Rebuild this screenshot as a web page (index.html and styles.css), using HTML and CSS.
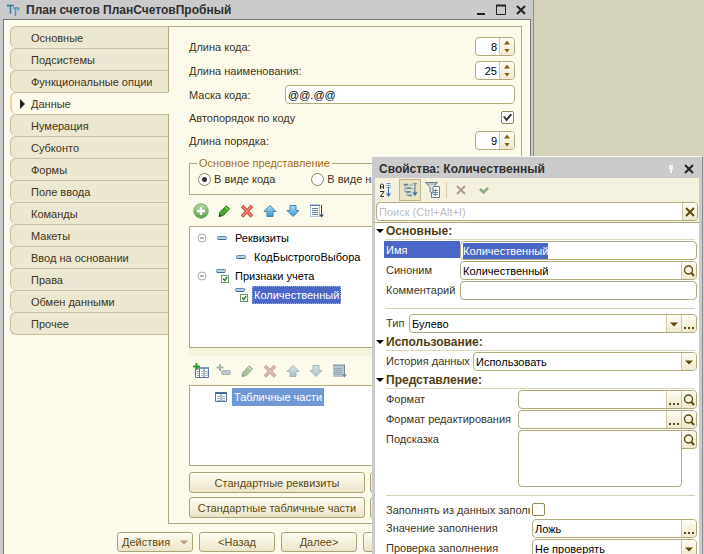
FILE: index.html
```html
<!DOCTYPE html>
<html lang="ru">
<head>
<meta charset="utf-8">
<title>План счетов ПланСчетовПробный</title>
<link rel="stylesheet" href="styles.css">
</head>
<body>
<svg class="sprite" aria-hidden="true">
  <defs>
    <linearGradient id="blue" x1="0" y1="0" x2="0" y2="1"><stop offset="0" stop-color="#a9dcf6"/><stop offset="1" stop-color="#3a9ad6"/></linearGradient>
    <linearGradient id="green" x1="0" y1="0" x2="0" y2="1"><stop offset="0" stop-color="#b5dba0"/><stop offset="1" stop-color="#5fa050"/></linearGradient>
  </defs>
  <symbol id="i-add" viewBox="0 0 16 16"><circle cx="8" cy="8" r="7.2" fill="url(#green)" stroke="#73a566"/><path d="M8 4v8M4 8h8" stroke="#fff" stroke-width="2.4"/></symbol>
  <symbol id="i-edit" viewBox="0 0 16 16"><path d="M3 13.5l.8-4 6.2-6.700 3.600 3-6.300 6.700z" fill="#45a62d" stroke="#2e7b20"/><path d="M9 4l3.500 3" stroke="#b4e09c"/><path d="M3 13.500l.5-2.500 2 2z" fill="#23451b"/></symbol>
  <symbol id="i-del" viewBox="0 0 16 16"><path d="M3 3l10 10.500M13 3l-10 10.500" stroke="#d8473d" stroke-width="3.400"/><path d="M3.500 3.500l9 9.500M12.500 3.500l-9 9.500" stroke="#f08a7c" stroke-width="1.400"/></symbol>
  <symbol id="i-up" viewBox="0 0 16 16"><path d="M8 2.500l6 6h-3v5H5v-5H2z" fill="url(#blue)" stroke="#407fae"/></symbol>
  <symbol id="i-down" viewBox="0 0 16 16"><path d="M8 13.500l6-6h-3v-5H5v5H2z" fill="url(#blue)" stroke="#407fae"/></symbol>
  <symbol id="i-list" viewBox="0 0 16 16"><path d="M2.500 1.500h9v12h-9z" fill="#fff" stroke="#b1c4d5"/><path d="M2 2.500h10M4 5.500h6M4 7.500h6M4 9.500h6M4 11.500h6" stroke="#61819f"/><path d="M13.500 2v11" stroke="#304e6b"/><path d="M11 11.500h5l-2.500 3z" fill="#304e6b"/></symbol>
  <symbol id="i-listoff" viewBox="0 0 16 16"><path d="M2 1h12v13H2z" fill="#b9c6cf"/><path d="M2 2.500h12M3 5.500h8M3 7.500h8M3 9.500h8M3 11.500h8" stroke="#8fa5b5"/><path d="M13.500 2v11" stroke="#6f8797"/><path d="M11 11.500h5l-2.500 3z" fill="#6f8797"/></symbol>
  <symbol id="i-table" viewBox="0 0 16 16"><path d="M2.500 3.500h11v9h-11z" fill="#fff" stroke="#587a9f"/><path d="M2 4h12" stroke="#496f99" stroke-width="2"/><path d="M8 4v9" stroke="#587a9f"/><path d="M4 7.500h3M9 7.500h3M4 9.500h3M9 9.500h3M4 11.500h3M9 11.500h3" stroke="#a5b6ca"/></symbol>
  <symbol id="i-addtable" viewBox="0 0 16 16"><path d="M2.500 4.500h13v10h-13z" fill="#fff" stroke="#587a9f"/><path d="M2 5h14" stroke="#7c9ab8" stroke-width="2"/><path d="M6.500 5v9M11 5v9" stroke="#587a9f"/><path d="M4 8.500h2M8 8.500h2M12 8.500h3M4 10.500h2M8 10.500h2M12 10.500h3M4 12.500h2M8 12.500h2M12 12.500h3" stroke="#a5b6ca"/><path d="M3.500 0v7M0 3.500h7" stroke="#329f2d" stroke-width="2"/></symbol>
  <symbol id="i-addsub" viewBox="0 0 16 16"><path d="M4 1v7M0.500 4.500h7" stroke="#4c8a60" stroke-width="2"/><rect x="5.500" y="7.500" width="9" height="4" rx="1" fill="#79a0bd" stroke="#547f9d"/></symbol>
  <symbol id="i-dash" viewBox="0 0 16 16"><rect x="3.500" y="6.500" width="9" height="3" rx="1" fill="#b4d0e0" stroke="#5e8aab"/><path d="M4 9.500h8" stroke="#456f91"/></symbol>
  <symbol id="i-flag" viewBox="0 0 16 16"><rect x="2.500" y="1.500" width="9" height="3" rx="1" fill="#b4d0e0" stroke="#5e8aab"/><path d="M3 4.500h8" stroke="#456f91"/><rect x="7.500" y="7.500" width="7" height="7" fill="#fff" stroke="#6a9b6e"/><path d="M9 10.500l1.700 2 2.500-3.500" fill="none" stroke="#3b8134" stroke-width="1.600"/></symbol>
  <symbol id="i-minus" viewBox="0 0 16 16"><circle cx="8" cy="8" r="4" fill="#fff" stroke="#aaa"/><path d="M6 8h4" stroke="#666"/></symbol>
  <symbol id="i-x" viewBox="0 0 16 16"><path d="M4 4l8 8M12 4l-8 8" stroke="currentColor" stroke-width="2"/></symbol>
  <symbol id="i-check" viewBox="0 0 16 16"><path d="M4 7l3.500 3.500 4.500-4.500" fill="none" stroke="currentColor" stroke-width="2.500"/></symbol>
  <symbol id="i-search" viewBox="0 0 16 16"><circle cx="7.500" cy="7" r="4" fill="none" stroke="currentColor" stroke-width="1.400"/><path d="M10 9.500l3 3.500" stroke="currentColor" stroke-width="2"/></symbol>
  <symbol id="i-drop" viewBox="0 0 16 16"><path d="M4 6.500h8l-4 4z" fill="currentColor"/></symbol>
  <symbol id="i-dots" viewBox="0 0 16 16"><path d="M3 11h2v2H3zM7 11h2v2H7zM11 11h2v2h-2z" fill="currentColor"/></symbol>
  <symbol id="i-sort" viewBox="0 0 16 16"><path d="M2.500 7V3l1-1h1l1 1v4M2.500 5h3M2 9.500h4L2.500 14.500H6" fill="none" stroke="#303030"/><path d="M10.500 1v12M12 1v5M9 1v5" stroke="#3267b5" stroke-dasharray="1 1"/><path d="M10.500 6v7" stroke="#3267b5"/><path d="M8 11.500h5l-2.500 3.500z" fill="#3267b5"/></symbol>
  <symbol id="i-group" viewBox="0 0 20 20"><path d="M3 4h5M6 8h5M6 12h5M8 16h4" stroke="#5b87a6" stroke-width="2"/><path d="M4.500 5v7h2M6.500 13v3h2M9 4.500h4M11 8.500h3" fill="none" stroke="#7895a9"/><path d="M15.500 2v13" stroke="#315f90"/><path d="M13 12.500h5l-2.500 4zM13 3h5" fill="#315f90" stroke="#6a94bc"/></symbol>
  <symbol id="i-filter" viewBox="0 0 16 16"><path d="M6.500 4.500h8v11h-8z" fill="#fff" stroke="#5f82a5"/><path d="M8 8.500h5M8 10.500h5M8 12.500h5M10.500 7v7" stroke="#668bb1"/><path d="M.5.500h12l-4.500 5v6l-3-2v-4z" fill="#dce3e3" stroke="#6b7e87"/><path d="M2 2h9" stroke="#8c9ca5"/></symbol>
</svg>

<div class="desktop">
<main class="window">
  <header class="titlebar">
    <svg class="app-icon" viewBox="0 0 14 14" aria-hidden="true"><path d="M0 2.500h7M3.500 2v9" fill="none" stroke="#357a9e" stroke-width="1.500"/><path d="M1 4V1.500M6 5h6M8.500 5v8M11.500 5v2.500" fill="none" stroke="#5292b0" stroke-width="1.500"/></svg>
    <h1>План счетов ПланСчетовПробный</h1>
    <div class="win-controls">
      <button aria-label="Свернуть"><svg viewBox="0 0 12 12"><path d="M2 10h8" stroke="#222" stroke-width="2"/></svg></button>
      <button aria-label="Развернуть"><svg viewBox="0 0 12 12"><path d="M1.500 1.500h9v9h-9z" fill="none" stroke="#222"/><path d="M1 1.500h10" stroke="#222" stroke-width="2"/></svg></button>
      <button aria-label="Закрыть"><svg viewBox="0 0 12 12"><path d="M2 2l8 8M10 2l-8 8" stroke="#222" stroke-width="2"/></svg></button>
    </div>
  </header>
  <div class="client">
    <div class="workspace">
      <nav class="tabs">
        <button>Основные</button>
        <button>Подсистемы</button>
        <button>Функциональные опции</button>
        <button class="active" aria-current="page">Данные</button>
        <button>Нумерация</button>
        <button>Субконто</button>
        <button>Формы</button>
        <button>Поле ввода</button>
        <button>Команды</button>
        <button>Макеты</button>
        <button>Ввод на основании</button>
        <button>Права</button>
        <button>Обмен данными</button>
        <button>Прочее</button>
      </nav>
      <section class="page">
        <div class="rows">
          <div class="row"><label for="len-code">Длина кода:</label><span class="spin"><input id="len-code" type="number" value="8"><span class="steps"><button aria-label="Больше"></button><button class="less" aria-label="Меньше"></button></span></span></div>
          <div class="row"><label for="len-name">Длина наименования:</label><span class="spin"><input id="len-name" type="number" value="25"><span class="steps"><button aria-label="Больше"></button><button class="less" aria-label="Меньше"></button></span></span></div>
          <div class="row"><label class="mask-label" for="mask">Маска кода:</label><input class="text-box" id="mask" type="text" value="@@.@@"></div>
          <div class="row short"><label for="auto">Автопорядок по коду</label><input class="check" id="auto" type="checkbox" checked></div>
          <div class="row"><label for="len-order">Длина порядка:</label><span class="spin"><input id="len-order" type="number" value="9"><span class="steps"><button aria-label="Больше"></button><button class="less" aria-label="Меньше"></button></span></span></div>
        </div>
        <fieldset class="group">
          <legend>Основное представление</legend>
          <div class="radios">
            <label><input type="radio" name="view" checked>В виде кода</label>
            <label><input type="radio" name="view">В виде наименования</label>
          </div>
        </fieldset>
        <div class="toolbar">
          <button aria-label="Добавить"><svg><use href="#i-add"/></svg></button>
          <button aria-label="Изменить"><svg><use href="#i-edit"/></svg></button>
          <button aria-label="Удалить"><svg><use href="#i-del"/></svg></button>
          <button aria-label="Вверх"><svg><use href="#i-up"/></svg></button>
          <button aria-label="Вниз"><svg><use href="#i-down"/></svg></button>
          <button aria-label="Упорядочить"><svg><use href="#i-list"/></svg></button>
        </div>
        <ul class="tree tall">
          <li><svg><use href="#i-minus"/></svg><svg><use href="#i-dash"/></svg><span>Реквизиты</span></li>
          <li class="child"><svg><use href="#i-dash"/></svg><span>КодБыстрогоВыбора</span></li>
          <li><svg><use href="#i-minus"/></svg><svg><use href="#i-flag"/></svg><span>Признаки учета</span></li>
          <li class="child"><svg><use href="#i-flag"/></svg><span class="selected">Количественный</span></li>
        </ul>
        <div class="splitter"></div>
        <div class="toolbar low">
          <button aria-label="Добавить табличную часть"><svg><use href="#i-addtable"/></svg></button>
          <button aria-label="Добавить реквизит" disabled><svg><use href="#i-addsub"/></svg></button>
          <button aria-label="Изменить" disabled><svg><use href="#i-edit"/></svg></button>
          <button aria-label="Удалить" disabled><svg><use href="#i-del"/></svg></button>
          <button aria-label="Вверх" disabled><svg><use href="#i-up"/></svg></button>
          <button aria-label="Вниз" disabled><svg><use href="#i-down"/></svg></button>
          <button class="solid" aria-label="Упорядочить" disabled><svg><use href="#i-listoff"/></svg></button>
        </div>
        <ul class="tree">
          <li class="leaf"><svg><use href="#i-table"/></svg><span class="muted">Табличные части</span></li>
        </ul>
        <div class="std-buttons">
          <button class="btn">Стандартные реквизиты</button><button class="btn" aria-label="Характеристики"></button>
          <button class="btn">Стандартные табличные части</button><button class="btn" aria-label="Предопределенные"></button>
        </div>
      </section>
    </div>
    <footer class="actions">
      <button class="btn menu">Действия<svg><use href="#i-drop"/></svg></button>
      <button class="btn">&lt;Назад</button>
      <button class="btn">Далее&gt;</button>
      <button class="btn" aria-label="Закрыть"></button>
      <button class="btn" aria-label="Справка"></button>
    </footer>
  </div>
</main>

<aside class="props">
  <header class="props-title">
    <h2>Свойства: Количественный</h2>
    <button class="pin" aria-label="Закрепить"><svg viewBox="0 0 12 12"><path d="M4 2h4v4l-1 1v3H5V7L4 6z" fill="#f1f1f1"/></svg></button>
    <button aria-label="Закрыть"><svg viewBox="0 0 12 12"><path d="M2 2l8 8M10 2l-8 8" stroke="#222" stroke-width="2"/></svg></button>
  </header>
  <div class="props-body">
    <div class="props-tools">
      <button aria-label="По алфавиту"><svg><use href="#i-sort"/></svg></button>
      <button class="pressed" aria-label="По категориям"><svg><use href="#i-group"/></svg></button>
      <button aria-label="Только важные"><svg><use href="#i-filter"/></svg></button>
      <span class="sep"></span>
      <button class="cancel" aria-label="Отменить"><svg><use href="#i-x"/></svg></button>
      <button class="accept" aria-label="Принять"><svg><use href="#i-check"/></svg></button>
    </div>
    <div class="search"><div class="field"><input type="text" aria-label="Поиск" placeholder="Поиск (Ctrl+Alt+I)"><button aria-label="Очистить"><svg><use href="#i-x"/></svg></button></div></div>

    <h3>Основные:</h3>
    <div class="grid names">
      <label class="current" for="p-name">Имя</label><div class="field"><input id="p-name" type="text" value="Количественный"></div>
      <label for="p-syn">Синоним</label><div class="field"><input id="p-syn" type="text" value="Количественный"><button aria-label="Открыть"><svg><use href="#i-search"/></svg></button></div>
      <label for="p-com">Комментарий</label><div class="field"><input id="p-com" type="text"></div>
    </div>
    <hr>
    <div class="grid type">
      <label for="p-type">Тип</label><div class="field"><span class="pick"><select id="p-type"><option>Булево</option></select><i><svg><use href="#i-drop"/></svg></i></span><button aria-label="Выбрать"><svg><use href="#i-dots"/></svg></button></div>
    </div>
    <h3>Использование:</h3>
    <div class="grid history">
      <label for="p-hist">История данных</label><div class="field"><span class="pick"><select id="p-hist"><option>Использовать</option></select><i><svg><use href="#i-drop"/></svg></i></span></div>
    </div>
    <h3>Представление:</h3>
    <div class="grid formats">
      <label for="p-fmt">Формат</label><div class="field"><input id="p-fmt" type="text"><button aria-label="Выбрать"><svg><use href="#i-dots"/></svg></button><button aria-label="Открыть"><svg><use href="#i-search"/></svg></button></div>
      <label for="p-efmt">Формат редактирования</label><div class="field"><input id="p-efmt" type="text"><button aria-label="Выбрать"><svg><use href="#i-dots"/></svg></button><button aria-label="Открыть"><svg><use href="#i-search"/></svg></button></div>
      <label for="p-tip">Подсказка</label><div class="area"><textarea id="p-tip"></textarea><button aria-label="Открыть"><svg><use href="#i-search"/></svg></button></div>
    </div>
    <hr>
    <div class="grid filling">
      <label for="p-fill">Заполнять из данных заполнения</label><input class="check" id="p-fill" type="checkbox">
      <label for="p-val">Значение заполнения</label><div class="field"><input id="p-val" type="text" value="Ложь"><button aria-label="Выбрать"><svg><use href="#i-dots"/></svg></button></div>
      <label for="p-chk">Проверка заполнения</label><div class="field"><span class="pick"><select id="p-chk"><option>Не проверять</option></select><i><svg><use href="#i-drop"/></svg></i></span></div>
    </div>
  </div>
</aside>
</div>
<script src="script.js"></script>
</body>
</html>
```
FILE: script.js
```js
// The name is ready for typing over when the palette opens.
const nameInput = document.getElementById('p-name');
nameInput.focus({ preventScroll: true });
nameInput.select();
```
FILE: styles.css
```css
:root {
  --cream: #fcfaeb;
  --line: #b0aa7e;
  --ink: #40351b;
  --brown: #5e4a10;
  --chrome: #cbcbcb;
  --select: #4a67c8;
}
* { box-sizing: border-box; }
body {
  margin: 0;
  font: 11px/16px "Liberation Sans", Arial, sans-serif;
  color: var(--ink);
}
button, input, select, textarea { font: inherit; color: inherit; margin: 0; }
button { padding: 0; border: 0; background: none; }
svg { display: block; flex: none; width: 16px; height: 16px; }
.sprite { position: absolute; width: 0; height: 0; }
h1, h2, h3 { margin: 0; font-size: 12px; line-height: 16px; }
::selection { color: #fff; background: var(--select); }

.desktop {
  position: relative;
  height: 100vh;
  overflow: hidden;
  background: #d6d3bd;
}

/* Object editor window */
.window {
  margin-right: 170px;
  min-height: 100vh;
  padding: 0 2px 0 3px;
  background: var(--chrome);
  border-right: 1px solid #8d8d8d;
}
.titlebar { display: flex; align-items: center; height: 19px; padding: 0 4px; }
.app-icon { width: 14px; height: 14px; margin-right: 5px; }
.titlebar h1 { flex: 1; color: #303030; }
.win-controls { display: flex; gap: 8px; }
.win-controls svg, .props-title svg { width: 12px; height: 12px; }
.client {
  min-height: calc(100vh - 19px);
  padding: 6px 8px 3px 6px;
  background: var(--cream);
  border: 1px solid #777;
  border-bottom: 0;
}
.workspace { display: flex; }
.tabs { display: flex; flex-direction: column; flex: none; width: 159px; margin-right: -1px; }
.tabs button {
  height: 22px;
  padding-left: 20px;
  text-align: left;
  background: #ece7d0;
  border: 1px solid #c5bf9f;
  border-bottom-width: 0;
  border-right-color: var(--line);
  border-radius: 6px 0 0 6px;
}
.tabs button:last-child { height: 23px; border-bottom-width: 1px; }
.tabs .active {
  display: flex;
  align-items: center;
  padding-left: 8px;
  background: var(--cream);
  border-left: 2px solid #efd292;
  border-right-color: var(--cream);
  z-index: 1;
}
.tabs .active::before {
  content: "";
  margin-right: 6px;
  border: 5px solid transparent;
  border-left-color: #222;
  border-right-width: 0;
}
.page {
  flex: 1;
  min-width: 0;
  padding: 10px 6px 5px 20px;
  border: 1px solid var(--line);
}
.rows { display: flex; flex-direction: column; gap: 5px; }
.row { display: flex; align-items: center; justify-content: space-between; height: 19px; }
.row.short { height: 17px; padding-right: 1px; }
.mask-label { width: 96px; flex: none; }
.text-box, .spin, .field {
  height: 19px;
  background: #fff;
  border: 1px solid var(--line);
  border-radius: 4px;
}
.text-box { flex: 1; min-width: 0; padding: 0 2px; color: #000; }
.spin { display: flex; width: 40px; overflow: hidden; }
.spin input {
  flex: 1;
  min-width: 0;
  padding: 0 2px;
  border: 0;
  background: none;
  text-align: right;
  color: #000;
  appearance: textfield;
}
.spin input::-webkit-inner-spin-button { display: none; }
.steps {
  display: flex;
  flex-direction: column;
  align-items: center;
  justify-content: center;
  gap: 4px;
  width: 15px;
  border-left: 1px solid #cfc9a6;
  background: linear-gradient(#fdfcf4, #efe9d0);
}
.steps button { width: 6px; height: 4px; background: #806210; clip-path: polygon(50% 0, 100% 100%, 0 100%); }
.steps .less { clip-path: polygon(0 0, 100% 0, 50% 100%); }

.check {
  appearance: none;
  display: grid;
  place-items: center;
  width: 13px;
  height: 13px;
  background: #fff;
  border: 1px solid #8f8758;
  border-radius: 2px;
}
.check:checked::before {
  content: "";
  width: 9px;
  height: 8px;
  background: #333;
  clip-path: polygon(0 40%, 20% 30%, 38% 60%, 85% 0, 100% 15%, 40% 100%);
}

.group {
  display: block;
  min-width: 0;
  margin: 6px 0 0;
  padding: 0 8px 7px;
  border: 1px solid var(--line);
}
.group legend { padding: 0 2px; margin-left: -1px; line-height: 15px; color: #a86f16; }
.radios { display: flex; gap: 36px; white-space: nowrap; }
.radios label { display: flex; align-items: center; gap: 3px; height: 16px; }
.radios input {
  appearance: none;
  display: grid;
  place-items: center;
  width: 13px;
  height: 13px;
  background: #fff;
  border: 1px solid #8f8758;
  border-radius: 50%;
}
.radios input:checked::before { content: ""; width: 5px; height: 5px; border-radius: 50%; background: #333; }

.toolbar { display: flex; align-items: center; gap: 7px; height: 31px; padding-left: 4px; }
.toolbar.low { height: 28px; }
.toolbar button:disabled { opacity: .55; filter: saturate(.5); }
.toolbar .solid:disabled { opacity: 1; filter: none; }
.tree {
  list-style: none;
  min-height: 81px;
  margin: 0;
  padding: 1px 4px;
  background: #fff;
  border: 1px solid var(--line);
  color: #000;
}
.tree.tall { min-height: 122px; }
.tree li { display: flex; align-items: center; height: 19px; }
.tree svg + svg { margin-left: 4px; }
.tree span { margin-left: 3px; padding: 0 2px; line-height: 18px; }
.tree .child { padding-left: 39px; }
.tree .leaf { padding-left: 19px; }
.tree .selected { color: #fff; background: var(--select); outline: 1px dotted #9db1ee; outline-offset: -1px; }
.tree .muted { color: #fff; background: #6f98d4; }
.splitter { height: 8px; margin-bottom: 1px; background: #f5f2de; }

.btn {
  height: 21px;
  color: var(--brown);
  background: linear-gradient(#fdfcf2, #f4efdb 60%, #e9e3c9);
  border: 1px solid #aaa478;
  border-radius: 3px;
  white-space: nowrap;
}
.std-buttons { display: grid; grid-template-columns: 176px 1fr; gap: 4px 5px; margin-top: 6px; }
.actions { display: flex; justify-content: flex-end; gap: 6px; margin-top: 8px; padding-right: 1px; }
.actions .btn { width: 76px; height: 20px; }
.actions .menu { display: flex; align-items: center; justify-content: space-between; padding: 0 0 0 4px; }
.actions .menu svg { color: #b99d7c; }

/* Properties palette */
.props {
  position: absolute;
  top: 156px;
  right: 1px;
  left: 372px;
  height: 600px;
  padding: 0 3px;
  background: var(--chrome);
  border-top: 1px solid #f4f4f4;
  border-right: 1px solid #8d8d8d;
}
.props-title { display: flex; align-items: center; gap: 6px; height: 21px; padding: 2px 4px 0; }
.props-title h2 { flex: 1; color: #303030; }
.props-body { min-height: 100%; background: #fff; }
.props-tools { display: flex; align-items: center; height: 24px; padding: 0 3px; background: #f4f1de; }
.props-tools .pressed { margin: 0 4px 0 5px; padding: 0 1px; background: #e9e2c3; border: 1px solid #bdb58b; }
.props-tools .pressed svg { width: 18px; height: 20px; }
.sep { width: 1px; height: 16px; margin: 0 6px 0 5px; background: #d2ccb0; }
.cancel { color: #b39a99; }
.accept { margin-left: 7px; color: #8caa89; }
.search { padding: 0 1px 1px 1px; border-bottom: 1px solid var(--line); background: #f4f1de; }
.field { display: flex; overflow: hidden; min-width: 0; color: #000; }
.field input, .field select { appearance: none; width: 100%; flex: 1; min-width: 0; padding: 0 2px; border: 0; background: none; outline: 0; }
.field input::placeholder { color: #bdbdbd; }
.field button, .pick i, .area button {
  display: grid;
  place-items: center;
  place-content: center;
  flex: none;
  width: 15px;
  color: var(--brown);
  border-left: 1px solid #cfc9a6;
  background: linear-gradient(#fdfcf4, #efe9d0);
}
.pick { display: grid; grid-template-columns: 1fr 15px; flex: 1; min-width: 0; }
.pick select { grid-area: 1 / 1 / 2 / 3; }
.pick i { grid-area: 1 / 2; pointer-events: none; }

.props-body h3 {
  display: flex;
  align-items: center;
  height: 17px;
  margin: 0 4px 1px 11px;
  color: #4f3e11;
  border-bottom: 1px solid #ddd8b8;
}
.props-body h3::before {
  content: "";
  margin-left: -10px;
  margin-right: 2px;
  border: 4px solid transparent;
  border-top-color: #000;
  border-bottom-width: 0;
}
.props-body hr { height: 1px; margin: 8px 4px 5px 11px; border: 0; background: #d5d0b3; }
.grid { display: grid; row-gap: 1px; margin: 0 2px 1px 9px; }
.grid label { height: 17px; padding-left: 2px; line-height: 18px; overflow: hidden; white-space: nowrap; }
.grid .current { color: #fff; background: var(--select); }
.names { grid-template-columns: 76px 1fr; }
.type { grid-template-columns: 25px 1fr; }
.history { grid-template-columns: 89px 1fr; }
.formats { grid-template-columns: 134px 1fr; }
.filling { grid-template-columns: 148px 1fr; }
.filling label:first-child { width: 146px; }
.filling .check { margin: 2px 0; }
.area { display: flex; align-items: flex-start; }
.area textarea { flex: 1; min-width: 0; height: 57px; resize: none; background: #fff; border: 1px solid var(--line); border-radius: 4px 0 4px 4px; }
.area button { height: 19px; border: 1px solid var(--line); border-left: 0; border-radius: 0 4px 4px 0; }
```
